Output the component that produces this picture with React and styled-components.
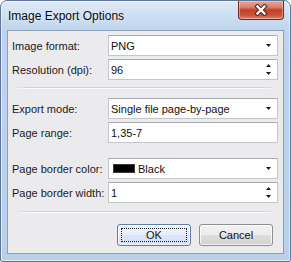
import React from 'react';
import styled, { createGlobalStyle } from 'styled-components';

const Global = createGlobalStyle`
  html, body { margin: 0; padding: 0; background: #ffffff; }
  body {
    width: 291px; height: 262px; overflow: hidden;
    font-family: "Liberation Sans", Arial, sans-serif;
    font-size: 11px; color: #1b1b1b;
  }
  * { box-sizing: border-box; }
`;

const Window = styled.div`
  width: 291px;
  height: 262px;
  display: flex;
  flex-direction: column;
  border: 1px solid #5f7794;
  border-radius: 7px 7px 2px 2px;
  background: linear-gradient(180deg, #dfeaf7 0px, #cddff2 14px, #bed4ec 30px, #b9d0ea 100%);
  box-shadow: inset 0 0 0 1px rgba(255, 255, 255, 0.55);
  padding: 0 6px 7px 6px;
`;

const TitleBar = styled.div`
  height: 29px;
  display: flex;
  align-items: flex-start;
`;

const Title = styled.div`
  font-size: 12px;
  color: #0b0b0b;
  padding: 8px 0 0 1px;
  line-height: 14px;
  text-shadow: 0 0 6px rgba(255, 255, 255, 0.9);
`;

const CloseButton = styled.div`
  margin-left: auto;
  width: 46px;
  height: 19px;
  border: 1px solid #6b2b25;
  border-top: none;
  border-radius: 0 0 4px 4px;
  background: linear-gradient(180deg, #e8a598 0%, #d9806f 35%, #c2402c 50%, #c9543d 80%, #dc8a6d 100%);
  box-shadow: inset 0 0 0 1px rgba(255, 220, 210, 0.45);
  display: flex;
  align-items: center;
  justify-content: center;
`;

const Client = styled.div`
  flex: 1;
  border: 1px solid #8c9fb8;
  background: #ebebee;
  display: flex;
  flex-direction: column;
  padding: 4px 5px 7px 4px;
`;

const Group = styled.div`
  display: flex;
  flex-direction: column;
  gap: 3px;
  margin-top: ${p => p.$top || 0}px;
`;

const Row = styled.div`
  display: grid;
  grid-template-columns: 96px 1fr;
  align-items: center;
  height: 21px;
`;

const Label = styled.div`
  white-space: nowrap;
`;

const Field = styled.div`
  height: 21px;
  background: #ffffff;
  border: 1px solid #c3c6cd;
  border-top-color: #a9acb3;
  display: flex;
  align-items: center;
  padding: 0 6px 0 2px;
  white-space: nowrap;
  color: #111;
`;

const Value = styled.span`
  flex: 1;
  display: flex;
  align-items: center;
  gap: 3px;
`;

const Swatch = styled.span`
  width: 22px;
  height: 9px;
  background: #000;
  border: 1px solid #3a3a3a;
  margin-left: 2px;
`;

const Separator = styled.div`
  height: 2px;
  margin: ${p => p.$top}px 0 ${p => p.$bottom}px;
  background:
    linear-gradient(90deg, rgba(235,235,238,1) 0%, rgba(235,235,238,0) 6%, rgba(235,235,238,0) 94%, rgba(235,235,238,1) 100%),
    linear-gradient(180deg, #d3d3d7 0 1px, #fbfbfc 1px 2px);
`;

const ButtonRow = styled.div`
  display: flex;
  justify-content: flex-end;
  gap: 8px;
  padding-right: 5px;
`;

const Button = styled.div`
  width: 74px;
  height: 22px;
  border-radius: 3px;
  border: 1px solid ${p => (p.$default ? '#5f7fa6' : '#8e8f8f')};
  background: ${p =>
    p.$default
      ? 'linear-gradient(180deg, #f1f5fe 0%, #e6edfc 50%, #dce5f9 51%, #d6e0f7 100%)'
      : 'linear-gradient(180deg, #f2f2f2 0%, #ebebeb 50%, #dddddd 51%, #d3d3d3 100%)'};
  box-shadow: inset 0 0 0 1px rgba(255, 255, 255, 0.75);
  display: flex;
  align-items: center;
  justify-content: center;
  position: relative;
  color: #111;
`;

const FocusRing = styled.span`
  position: absolute;
  inset: 3px;
  border: 1px dotted #1a1a1a;
  border-radius: 1px;
`;

const Arrow = () => (
  <svg width="5" height="3" viewBox="0 0 5 3">
    <polygon points="0,0 5,0 2.5,3" fill="#1a1a1a" />
  </svg>
);

const Spinner = () => (
  <svg width="5" height="11" viewBox="0 0 5 11">
    <polygon points="2.5,0 5,3 0,3" fill="#1a1a1a" />
    <polygon points="0,8 5,8 2.5,11" fill="#1a1a1a" />
  </svg>
);

const CloseGlyph = () => (
  <svg width="14" height="12" viewBox="0 0 14 12">
    <path d="M3.5 2.5 L10.5 9.5 M10.5 2.5 L3.5 9.5" stroke="#5a231c" strokeWidth="4.5" strokeLinecap="square" />
    <path d="M3.5 2.5 L10.5 9.5 M10.5 2.5 L3.5 9.5" stroke="#ffffff" strokeWidth="2.4" strokeLinecap="square" />
  </svg>
);

const FormRow = ({ label, children, kind }) => (
  <Row>
    <Label>{label}</Label>
    <Field>
      <Value>{children}</Value>
      {kind === 'combo' && <Arrow />}
      {kind === 'spin' && <Spinner />}
    </Field>
  </Row>
);

export default function App() {
  return (
    <>
      <Global />
      <Window>
        <TitleBar>
          <Title>Image Export Options</Title>
          <CloseButton>
            <CloseGlyph />
          </CloseButton>
        </TitleBar>
        <Client>
          <Group>
            <FormRow label="Image format:" kind="combo">PNG</FormRow>
            <FormRow label="Resolution (dpi):" kind="spin">96</FormRow>
          </Group>
          <Separator $top={7} $bottom={9} />
          <Group>
            <FormRow label="Export mode:" kind="combo">Single file page-by-page</FormRow>
            <FormRow label="Page range:">1,35-7</FormRow>
          </Group>
          <Group $top={15}>
            <FormRow label="Page border color:" kind="combo">
              <Swatch />
              Black
            </FormRow>
            <FormRow label="Page border width:" kind="spin">1</FormRow>
          </Group>
          <Separator $top={8} $bottom={11} />
          <ButtonRow>
            <Button $default>
              <FocusRing />
              OK
            </Button>
            <Button>Cancel</Button>
          </ButtonRow>
        </Client>
      </Window>
    </>
  );
}
